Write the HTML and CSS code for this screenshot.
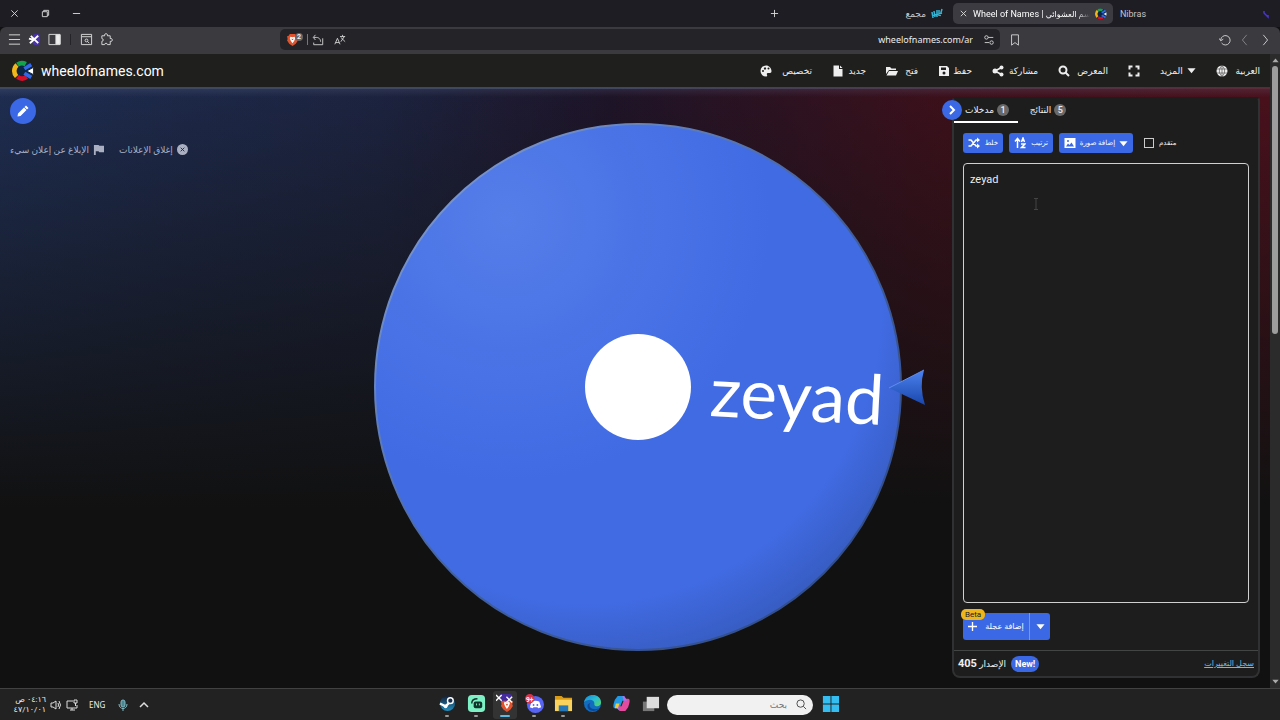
FILE: index.html
```html
<!DOCTYPE html>
<html lang="ar">
<head>
<meta charset="utf-8">
<title>Wheel of Names</title>
<link rel="stylesheet" href="styles.css">
</head>
<body>
<svg class="defs" aria-hidden="true">
  <symbol id="wheel-logo" viewBox="0 0 24 24">
    <circle cx="11" cy="12" r="11" fill="#0b2545"/>
    <g fill="none" stroke-width="5">
      <path d="M6 5A8.500 8.500 0 0 1 15 4.500" stroke="#14a34a"/>
      <path d="M5 18A8.500 8.500 0 0 1 5.500 5.500" stroke="#f2b619"/>
      <path d="M16 18.500A8.500 8.500 0 0 1 6 18.500" stroke="#d50f25"/>
      <path d="M13.500 9.500L21 5M13.500 14.500L21 19" stroke="#3369e8" stroke-width="4"/>
    </g>
    <path d="M16 12l7.500-4v8z" fill="#fff" stroke="#0b2545"/>
  </symbol>
  <symbol id="caret" viewBox="0 0 10 10"><path d="M.5 2.500h9L5 8z" fill="currentColor"/></symbol>
  <symbol id="brave" viewBox="0 0 24 24">
    <path d="M7 1h10l2 3 3 1-1 5 1 3-4 6-6 4-6-4-4-6 1-3-1-5 3-1z" fill="#e2532d"/>
    <path d="M8 6l4 1 4-1 1 3-2 5-3 4-3-4-2-5z" fill="#fff"/>
    <path d="M10 9l2 1 2-1-1 3h-2z" fill="#e2532d"/>
  </symbol>
</svg>
<div class="screen">
  <header class="tabstrip">
    <div class="window-controls">
      <button aria-label="Close"><svg viewBox="0 0 10 10"><path d="M1.500 1.500l7 7m0-7l-7 7"/></svg></button>
      <button aria-label="Restore"><svg viewBox="0 0 10 10"><path d="M3 3V1.500h5.500V7H7M1.500 3H7v5.500H1.500z"/></svg></button>
      <button aria-label="Minimize"><svg viewBox="0 0 10 10"><path d="M1 5h8"/></svg></button>
    </div>
    <nav class="tabs">
      <button class="new-tab" aria-label="New tab"><svg viewBox="0 0 10 10"><path d="M5 1v8M1 5h8"/></svg></button>
      <button class="tab tab-group"><span>مجمع</span><svg viewBox="0 0 12 12"><path d="M1 4l1 6m1-7l1 6m2-7v7m2-7v6m3-7L9 8M1 8l10-3" stroke="#35b5d6" stroke-width="1.500"/></svg></button>
      <div class="tab active"><button class="tab-close" aria-label="Close tab"><svg viewBox="0 0 10 10"><path d="M2 2l6 6m0-6L2 8"/></svg></button><span class="tab-title">Wheel of Names | <bdi>الاسم العشوائي</bdi></span><svg class="favicon"><use href="#wheel-logo"/></svg></div>
      <button class="tab tab-nibras">Nibras</button>
      <svg class="pinned" viewBox="0 0 10 12"><path d="M3 3v2l4 4V7" stroke="#4934d0" stroke-width="1.500"/></svg>
    </nav>
  </header>
  <div class="toolbar">
    <div class="tools">
      <button aria-label="Menu"><svg viewBox="0 0 14 14"><path d="M1 2h12M1 7h12M1 12h12"/></svg></button>
      <button aria-label="Extension"><svg viewBox="0 0 14 14"><rect x="5" y="1" width="8" height="12" rx="3" fill="#4a32ad" stroke="none"/><path d="M3 3l8 8M11 3l-9 8M1 6l4 1" stroke="#fff" stroke-width="2"/></svg></button>
      <button aria-label="Sidebar"><svg viewBox="0 0 14 14"><path d="M1 1.500h12v11H1z"/><path d="M8.500 2H13v10H8.500z" fill="#eee"/></svg></button>
      <i></i>
      <button aria-label="Search tabs"><svg viewBox="0 0 14 14"><path d="M1.500 1.500h11v11h-11zM2 4h10"/><circle cx="7" cy="8" r="1.500"/><path d="M8 9l2 2"/></svg></button>
      <button aria-label="Extensions"><svg viewBox="0 0 14 14"><path d="M2 3h3c-1-3 4-3 3 0h3v3c3-1 3 4 0 3v3.500H8c0-2-3-2-3 0H2V9c2 0 2-3 0-3z"/></svg></button>
    </div>
    <div class="address">
      <button class="shield" aria-label="Shields"><svg><use href="#brave"/></svg><b>2</b></button>
      <i></i>
      <button aria-label="Share page"><svg viewBox="0 0 14 14"><path d="M4 1L1.500 4 4 7M2 4h3c4 0 5 3 5 5M2 10v2.500h10.500V5"/></svg></button>
      <button class="translate" aria-label="Translate"><svg viewBox="0 0 14 14"><path d="M1 12l3-7 3 7M2 10h4M7 3h6M10 1v2M8 4l5 5M12 3l-4 6"/></svg></button>
      <label class="url"><input aria-label="Address" value="wheelofnames.com/ar"></label>
      <button aria-label="Site settings"><svg viewBox="0 0 14 14"><path d="M6 4h6M2 10h5"/><circle cx="4" cy="4" r="2"/><circle cx="10" cy="10" r="2"/></svg></button>
    </div>
    <div class="nav-buttons">
      <button aria-label="Bookmark"><svg viewBox="0 0 14 14"><path d="M3 1h8v12L7 10l-4 3z"/></svg></button>
      <span class="history">
        <button aria-label="Reload"><svg viewBox="0 0 14 14"><path d="M2 7a5.500 5.500 0 1 1 1 3.500M0 5l2 3 3-2"/></svg></button>
        <button class="dim" aria-label="Forward"><svg viewBox="0 0 14 14"><path d="M9 1L4 7l5 6"/></svg></button>
        <button aria-label="Back"><svg viewBox="0 0 14 14"><path d="M5 1l5 6-5 6"/></svg></button>
      </span>
    </div>
  </div>
  <div class="viewport">
    <div class="page">
      <header class="app-header">
        <a class="brand" href="#"><svg><use href="#wheel-logo"/></svg>wheelofnames.com</a>
        <nav class="menu">
          <button class="w52"><svg viewBox="0 0 24 24"><path fill-rule="evenodd" d="M12 1a11 11 0 0 0 0 22c2 0 3-1 2-3-1-3 0-4 3-4h3c2 0 3-2 3-4C23 6 18 1 12 1zM6 14a2 2 0 1 1 0-4 2 2 0 0 1 0 4zm2-6a2 2 0 1 1 4-2 2 2 0 0 1-4 2zm7-1a2 2 0 1 1 4 0 2 2 0 0 1-4 0z"/></svg><span>تخصيص</span></button>
          <button class="w34"><svg viewBox="0 0 24 24"><path d="M3 1h11v7h7v15H3zM16 1l5 5h-5z"/></svg><span>جديد</span></button>
          <button class="w32"><svg viewBox="0 0 24 24"><path d="M0 18V4h8l3 3h9v3H6zM6 12h18l-4 9H1z"/></svg><span>فتح</span></button>
          <button class="w34"><svg viewBox="0 0 24 24"><path fill-rule="evenodd" d="M2 2h16l4 4v16H2zm4 3v5h10V5zm6 8a3 3 0 1 0 0 6 3 3 0 0 0 0-6z"/></svg><span>حفظ</span></button>
          <button class="w46"><svg viewBox="0 0 24 24"><path d="M6 12l13-7M6 12l13 7" stroke="currentColor" stroke-width="3"/><circle cx="6" cy="12" r="5"/><circle cx="19" cy="5" r="4"/><circle cx="19" cy="19" r="4"/></svg><span>مشاركة</span></button>
          <button class="w50"><svg viewBox="0 0 24 24"><g fill="none" stroke="currentColor" stroke-width="4"><circle cx="10" cy="10" r="7"/><path d="M15 15l7 7"/></g></svg><span>المعرض</span></button>
          <button aria-label="ملء الشاشة"><svg viewBox="0 0 24 24"><path d="M3 9V3h6M15 3h6v6M21 15v6h-6M9 21H3v-6" fill="none" stroke="currentColor" stroke-width="4"/></svg></button>
          <button class="w36"><span>المزيد</span><svg class="small"><use href="#caret"/></svg></button>
          <button class="w44"><svg viewBox="0 0 24 24"><circle cx="12" cy="12" r="11"/><path d="M12 1c-7 7-7 15 0 22 7-7 7-15 0-22v22M1 8h22M1 16h22" fill="none" stroke="#1f1f1f"/></svg><span>العربية</span></button>
        </nav>
      </header>
      <main class="stage">
        <section class="left-tools">
          <button class="edit" aria-label="تعديل"><svg viewBox="0 0 24 24"><path d="M1 23l1-6L14 5l5 5L7 22zM15 4l3-3 5 5-3 3z" fill="#fff"/></svg></button>
          <div class="ad-links">
            <button><span>الإبلاغ عن إعلان سيء</span><svg viewBox="0 0 12 12"><path d="M1 1h5l1 1h5v7H7L6 8H3v4H1z"/></svg></button>
            <button><span>إغلاق الإعلانات</span><svg viewBox="0 0 12 12"><circle cx="6" cy="6" r="6"/><path d="M4 4l4 4m0-4L4 8" stroke="#1b2747"/></svg></button>
          </div>
        </section>
        <svg class="wheel" viewBox="374 123 552 530" role="img" aria-label="zeyad">
          <defs>
            <radialGradient id="shine" cx=".25" cy=".18" r=".5"><stop offset="0" stop-color="#567ee9"/><stop offset=".5" stop-color="#4a74e6"/><stop offset="1" stop-color="#416be3"/></radialGradient>
            <radialGradient id="shade" cx=".4" cy=".35" r=".72"><stop offset=".78" stop-color="#2f50a8" stop-opacity="0"/><stop offset="1" stop-color="#3155af" stop-opacity=".8"/></radialGradient>
            <linearGradient id="rim" x2="1" y2="1"><stop stop-color="#8ba5dd"/><stop offset=".5" stop-color="#42619e"/><stop offset="1" stop-color="#2c4684"/></linearGradient>
            <linearGradient id="pointer" x2="0" y2="1"><stop stop-color="#4d82ef"/><stop offset="1" stop-color="#1946ac"/></linearGradient>
          </defs>
          <circle cx="638" cy="387" r="263" fill="url(#shine)"/>
          <circle cx="638" cy="387" r="263" fill="url(#shade)" stroke="url(#rim)" stroke-width="2"/>
          <circle cx="638" cy="387" r="53" fill="#fff"/>
          <text x="709" y="416" transform="rotate(3 709 416)">zeyad</text>
          <path d="M889 388l35-18q-5 17 1 35z" fill="url(#pointer)"/>
          <path d="M889 388l35-18" stroke="#5f8eef"/>
        </svg>
        <aside class="panel">
          <button class="collapse" aria-label="إخفاء"><svg viewBox="0 0 10 10"><path d="M3 1l4 4-4 4" fill="none" stroke="#fff" stroke-width="2"/></svg></button>
          <nav class="panel-tabs">
            <button class="selected">مدخلات<b>1</b></button>
            <button>النتائج<b>5</b></button>
          </nav>
          <div class="panel-body">
            <div class="actions">
              <button class="w40"><svg viewBox="0 0 24 24"><path d="M1 6h5l10 12h5M1 18h5L16 6h5" fill="none" stroke="#fff" stroke-width="3"/><path d="M18 1l6 5-6 5zM18 13l6 5-6 5z"/></svg><span>خلط</span></button>
              <button class="w44"><svg viewBox="0 0 24 24"><path d="M7 22V5M2 9l5-6 5 6M15 10l3-8 3 8M14 14h8l-7 7h8" fill="none" stroke="#fff" stroke-width="3"/></svg><span>ترتيب</span></button>
              <button class="w74"><svg viewBox="0 0 24 24"><path fill-rule="evenodd" d="M1 2h22v20H1zm3 17h16l-5-8-4 5-3-3zM8 6a2 2 0 1 0 0 4 2 2 0 0 0 0-4z"/></svg><span>إضافة صورة</span><svg class="small"><use href="#caret"/></svg></button>
              <label><input type="checkbox">متقدم</label>
            </div>
            <textarea aria-label="مدخلات">zeyad</textarea>
            <div class="add">
              <button class="add-main"><svg viewBox="0 0 10 10"><path d="M5 0v10M0 5h10" stroke="#fff" stroke-width="1.500"/></svg><span>إضافة عجلة</span></button>
              <button class="add-more" aria-label="المزيد"><svg class="small"><use href="#caret"/></svg></button>
              <b class="beta">Beta</b>
            </div>
          </div>
          <footer><span class="version" dir="rtl">الإصدار <b>405</b></span><b class="new">New!</b><a href="#">سجل التغييرات</a></footer>
          <svg class="cursor" viewBox="0 0 6 12"><path d="M1 .5h4M3 .5v11M1 11.500h4" fill="none" stroke="#444"/></svg>
        </aside>
      </main>
    </div>
    <div class="scrollbar"><svg><use href="#caret"/></svg><div class="track"><i></i></div><svg><use href="#caret"/></svg></div>
  </div>
  <footer class="taskbar">
    <div class="tray">
      <div class="clock" dir="rtl"><span>٠٤:١٦ ص</span><span>٤٧/١٠/٠١</span></div>
      <svg viewBox="0 0 12 12"><path d="M1 4h2l3-2v8L3 8H1zM8 4q1 2 0 4M9 2q3 4 0 8"/></svg>
      <svg viewBox="0 0 12 12"><path d="M7 2H1v7h10V6M4 11h5M6 9v2M8 1h3v3H8zM9.500 4v3"/></svg>
      <span class="lang">ENG</span>
      <svg class="mic" viewBox="0 0 12 12"><rect x="4" y="1" width="4" height="7" rx="2" fill="#4a8790"/><path d="M2 5c0 6 8 6 8 0M6 9v3"/></svg>
      <svg class="up" viewBox="0 0 12 12"><path d="M2 8l4-4 4 4" stroke-width="1.500"/></svg>
    </div>
    <div class="apps">
      <button class="running" aria-label="Steam"><svg viewBox="0 0 20 20"><defs><linearGradient id="st" x2="0" y2="1"><stop stop-color="#152039"/><stop offset="1" stop-color="#2190bf"/></linearGradient></defs><circle cx="10" cy="10" r="8" fill="url(#st)"/><path d="M2 10l6 3 5-5" stroke="#fff" stroke-width="2.500" fill="none"/><circle cx="13" cy="7" r="3" fill="#17304f" stroke="#fff" stroke-width="1.500"/><circle cx="8" cy="13" r="2" fill="#fff"/></svg></button>
      <button class="running" aria-label="Streamlabs"><svg viewBox="0 0 20 20"><rect x="1" y="1" width="18" height="18" rx="4" fill="#7df0c5"/><path d="M5 10c0-4 3-5 6-5" fill="none" stroke="#10332b" stroke-width="1.500"/><rect x="7" y="8" width="9" height="7" rx="2" fill="#10332b"/><path d="M10 10v2m3-2v2" stroke="#7df0c5"/></svg></button>
      <button class="running current" aria-label="Brave"><svg viewBox="0 0 20 20"><use href="#brave" x="4" y="4" width="15" height="16"/><rect x="3" y="0" width="14" height="7" rx="3" fill="#452b9e"/><path d="M0 1l6 6m0-6L0 7M11 3l6 6m0-6l-6 6" stroke="#fff" stroke-width="1.500"/></svg></button>
      <button class="running" aria-label="Discord"><svg viewBox="0 0 20 20"><circle cx="11" cy="11" r="9" fill="#5865f2"/><path d="M7 8q4-2 8 0l2 6-3 1-1-1H9l-1 1-3-1z" fill="#fff"/><circle cx="9" cy="11.500" r="1" fill="#5865f2"/><circle cx="13" cy="11.500" r="1" fill="#5865f2"/><circle cx="5" cy="5" r="5" fill="#d8354b"/><text class="count" x="1" y="8">9+</text></svg></button>
      <button class="running" aria-label="Files"><svg viewBox="0 0 20 20"><path d="M1 2h7l2 2h9v5H1z" fill="#d99a16"/><path d="M1 6h18v12H1z" fill="#fbd35c"/><path d="M5 12h10v6H5z" fill="#2678b8"/></svg></button>
      <button aria-label="Edge"><svg viewBox="0 0 20 20"><defs><linearGradient id="ed" x2="1" y2="1"><stop stop-color="#1680d7"/><stop offset=".5" stop-color="#29bfd0"/><stop offset="1" stop-color="#5bd655"/></linearGradient></defs><circle cx="10" cy="10" r="9" fill="#126cc0"/><path d="M1 9C3-2 19-1 19 9c0 5-8 5-7 1 0-5-8-5-11-1z" fill="url(#ed)"/><path d="M8 9c-4 5 3 9 9 6-4 5-14 3-12-4z" fill="#0c4696"/></svg></button>
      <button aria-label="Copilot"><svg viewBox="0 0 20 20"><path d="M6 2h6l3 5h-4L8 15H3c-3 0-1-6 0-9z" fill="#2299e2"/><path d="M14 18H8l-2-5h4l3-8h4c3 0 1 6 0 9z" fill="#e24b9e"/><path d="M11 2h2l3 5h-4zM3 13h4l1 5z" fill="#ae70ec"/><path d="M4 10l4 0-2 5H3z" fill="#e9cb42"/></svg></button>
      <button aria-label="Task view"><svg viewBox="0 0 20 20"><path d="M2 8h12v10H2z" fill="#777"/><path d="M6 3h13v12H6z" fill="#ddd"/></svg></button>
      <label class="search"><input aria-label="بحث" placeholder="بحث" dir="rtl"><svg viewBox="0 0 12 12"><circle cx="5" cy="5" r="4"/><path d="M8 8l3 3"/></svg></label>
      <button aria-label="Start"><svg viewBox="0 0 20 20"><path d="M2 2h8v8H2zM11 2h8v8h-8zM2 11h8v8H2zM11 11h8v8h-8z" fill="#35bdf2"/></svg></button>
    </div>
  </footer>
</div>
</body>
</html>
```
FILE: styles.css
```css
* { box-sizing: border-box; }
body { margin: 0; background: #111; color: #eee; font-family: Roboto, "DejaVu Sans", sans-serif; font-size: 11px; }
button, input, textarea { font: inherit; color: inherit; }
button { display: flex; align-items: center; justify-content: center; padding: 0; border: 0; background: none; white-space: nowrap; }
svg { flex: none; width: 12px; height: 12px; }
.defs { position: absolute; width: 0; height: 0; }
.screen { display: flex; flex-direction: column; min-height: 100vh; }

.tabstrip { display: flex; justify-content: space-between; height: 27px; background: #1e1d23; font-size: 9px; }
.tabstrip svg, .toolbar svg { fill: none; stroke: #ddd; }
.window-controls { display: flex; gap: 19px; padding-left: 8px; }
.window-controls svg { width: 9px; height: 9px; }
.window-controls button { width: 12px; }
.tabs { display: flex; align-items: center; padding-right: 9px; }
.new-tab { width: 10px; margin-right: 122px; }
.new-tab svg, .tab-close svg { width: 9px; height: 9px; }
.tab { display: flex; align-items: center; height: 21px; color: #c5c5c9; }
.tab-group { gap: 5px; width: 42px; margin-right: 10px; justify-content: flex-end; }
.tab.active { gap: 5px; width: 160px; padding: 0 6px; border-radius: 5px; background: #3c3b41; color: #fff; }
.tab-title { flex: 1; min-width: 0; white-space: nowrap; mask-image: linear-gradient(to right, #000 88%, transparent); }
.tab-title bdi { font-size: 8px; }
.tabstrip .favicon { stroke: none; }
.tab-nibras { width: 40px; margin-right: 108px; }
.pinned { width: 10px; }

.toolbar { display: flex; align-items: center; height: 27px; padding-bottom: 2px; border-radius: 6px 6px 0 0; background: #3b3a3f; }
.tools { display: flex; align-items: center; gap: 7px; width: 280px; padding-left: 8px; }
.tools button svg { width: 13px; height: 13px; }
.tools i, .address i { width: 1px; height: 11px; background: #77767b; }
.tools i { margin: 0 2px; background: #242328; }
.address { display: flex; flex: 1; align-items: center; gap: 4px; height: 21px; padding: 0 5px 0 6px; border-radius: 5px; background: #242328; }
.shield { gap: 0; }
.toolbar .shield svg { width: 13px; height: 14px; stroke: none; }
.shield b { align-self: flex-start; width: 8px; height: 8px; margin-left: -4px; border-radius: 4px; background: #66666b; font-size: 7px; line-height: 8px; }
.translate { margin-left: 6px; }
.url { display: flex; flex: 1; margin-right: 6px; }
.url input { flex: 1; border: 0; background: none; text-align: right; font-family: "Noto Sans", sans-serif; font-size: 9px; padding: 0; }
.nav-buttons { display: flex; justify-content: space-between; width: 280px; padding: 0 9px; }
.history { display: flex; gap: 8px; }
.dim { opacity: .5; }

.viewport { display: flex; flex: 1; }
.page { display: flex; flex: 1; flex-direction: column; min-width: 0; }
.app-header { display: flex; align-items: center; justify-content: space-between; height: 35px; padding: 0 10px 0 12px; background: #1f1f1e; border-bottom: 2px solid; border-image: linear-gradient(to right, #3f4861 45%, #5b2a38) 1; }
.brand { display: flex; align-items: center; gap: 7px; color: #fff; font-size: 14px; text-decoration: none; }
.brand svg { width: 22px; height: 22px; }
.menu { display: flex; gap: 20px; font-size: 9px; }
.menu button { justify-content: space-between; }
.menu svg, .actions svg { fill: currentColor; }
.menu svg.small, svg.small { width: 9px; height: 9px; }
.w32 { width: 32px; }
.w34 { width: 34px; }
.w36 { width: 36px; }
.w44 { width: 44px; }
.w46 { width: 46px; }
.w50 { width: 50px; }
.w52 { width: 52px; }
.w40 { width: 40px; }
.w74 { width: 74px; }

.stage { display: grid; flex: 1; grid-template-columns: 1fr 552px 334px; padding: 8px 10px 10px; background:
  linear-gradient(to bottom, rgba(120, 130, 170, .16), transparent 8px),
  linear-gradient(to bottom, transparent, #111 70%),
  linear-gradient(to right, #1e2d51, #1c233f 30%, #1e1428 48%, #3d101b 75%, #4a101c); }
.left-tools { padding-top: 1px; }
.edit { width: 26px; height: 26px; border-radius: 50%; background: #3b68e4; }
.ad-links { display: flex; gap: 15px; margin-top: 20px; font-size: 9px; }
.ad-links button { gap: 4px; color: #aab0c2; }
.ad-links svg { width: 11px; height: 11px; fill: #aab0c2; }
.wheel { width: 100%; height: auto; margin-top: 26px; }
.wheel text { font-family: Lato, sans-serif; font-size: 69px; fill: #fff; }
.panel { position: relative; display: flex; flex-direction: column; margin-left: 26px; border: 2px solid #303132; border-top-color: #1d1d1d; border-radius: 4px 4px 8px 8px; background: #1d1d1d; }
.collapse { position: absolute; left: -12px; top: 1px; width: 20px; height: 20px; border-radius: 50%; background: #3b68e4; }
.collapse svg { width: 10px; height: 10px; }
.panel-tabs { display: flex; height: 24px; font-size: 9px; }
.panel-tabs button { gap: 3px; width: 64px; padding-left: 2px; border-bottom: 2px solid transparent; }
.panel-tabs button + button { width: 60px; padding: 0; }
.panel-tabs .selected { border-color: #fff; }
.panel-tabs b { width: 12px; height: 12px; border-radius: 6px; background: #696969; font-size: 9px; font-weight: 500; line-height: 12px; }
.panel-body { display: flex; flex: 1; flex-direction: column; gap: 10px; padding: 10px 9px; }
.actions { display: flex; gap: 6px; font-size: 7px; }
.actions button { justify-content: space-between; height: 20px; padding: 0 5px; border-radius: 3px; background: #3b68e4; color: #fff; }
.actions label { display: flex; align-items: center; gap: 5px; margin-left: 5px; }
.actions input { appearance: none; width: 10px; height: 10px; margin: 0; border: 1px solid #ccc; }
textarea { flex: 1; min-height: 200px; padding: 9px 6px; border: 1px solid #d0d0d0; border-radius: 4px; background: #1d1d1d; color: #eee; resize: none; outline: 0; }
.add { position: relative; display: flex; align-self: flex-start; height: 27px; font-size: 8px; }
.add button { background: #3b68e4; color: #fff; }
.add-main { gap: 8px; width: 66px; border-radius: 3px 0 0 3px; }
.add-main svg { width: 9px; height: 9px; }
.add .add-more { width: 21px; border-left: 1px solid #7896ea; border-radius: 0 3px 3px 0; }
.beta { position: absolute; left: -2px; top: -4px; padding: 0 4px; border-radius: 5px; background: #efb51d; color: #222; font-size: 8px; font-weight: 400; line-height: 11px; }
.panel footer { display: flex; align-items: center; gap: 5px; height: 26px; padding: 0 4px; border-top: 1px solid #434444; }
.panel footer a { margin-left: auto; color: #76b7da; font-size: 8px; }
.version { font-size: 9px; }
.version b { font-size: 11px; }
.new { padding: 0 4px; border-radius: 8px; background: #3b68e4; color: #fff; font-size: 9px; line-height: 16px; }
.cursor { position: absolute; left: 79px; top: 99px; width: 6px; }
.scrollbar { display: flex; flex-direction: column; align-items: center; gap: 1px; width: 10px; padding: 2px 0; background: #2b2b2b; color: #aaa; }
.scrollbar svg { width: 7px; height: 9px; }
.scrollbar svg:first-child { transform: rotate(180deg); }
.track { flex: 1; }
.track i { display: block; width: 6px; height: 44%; border-radius: 3px; background: #9d9d9d; }

.taskbar { display: grid; grid-template-columns: 435px auto 1fr; align-items: center; height: 32px; border-top: 1px solid #424242; background: #222; }
.tray { display: flex; align-items: center; gap: 4px; padding-left: 12px; font-size: 8px; }
.tray svg { fill: none; stroke: #ddd; }
.clock { display: flex; flex-direction: column; width: 34px; line-height: 10px; white-space: nowrap; }
.lang { margin: 0 8px 0 7px; font-family: "Noto Sans", sans-serif; }
.tray .mic { stroke: #82bac3; }
.up { margin-left: 5px; }
.apps { display: flex; align-items: center; gap: 5px; }
.apps button { width: 24px; height: 28px; border-bottom: 2px solid transparent; border-radius: 3px; }
.apps button svg { width: 19px; height: 19px; }
.apps .running::after { content: ""; align-self: flex-end; width: 4px; height: 2px; margin: 0 -4px 0 0; border-radius: 1px; background: #999; transform: translateX(-12px); }
.apps .current { background: #333; }
.apps .current::after { width: 10px; margin-right: -10px; background: #60b9e1; transform: translateX(-15px); }
.count { fill: #fff; font-size: 7px; font-weight: 700; }
.search { display: flex; align-items: center; gap: 7px; width: 146px; height: 20px; padding: 0 6px; border-radius: 10px; background: #f1f1f1; color: #555; }
.search input { flex: 1; min-width: 0; border: 0; background: none; font-size: 9px; outline: 0; }
.search svg { width: 11px; height: 11px; fill: none; stroke: #444; }
```
